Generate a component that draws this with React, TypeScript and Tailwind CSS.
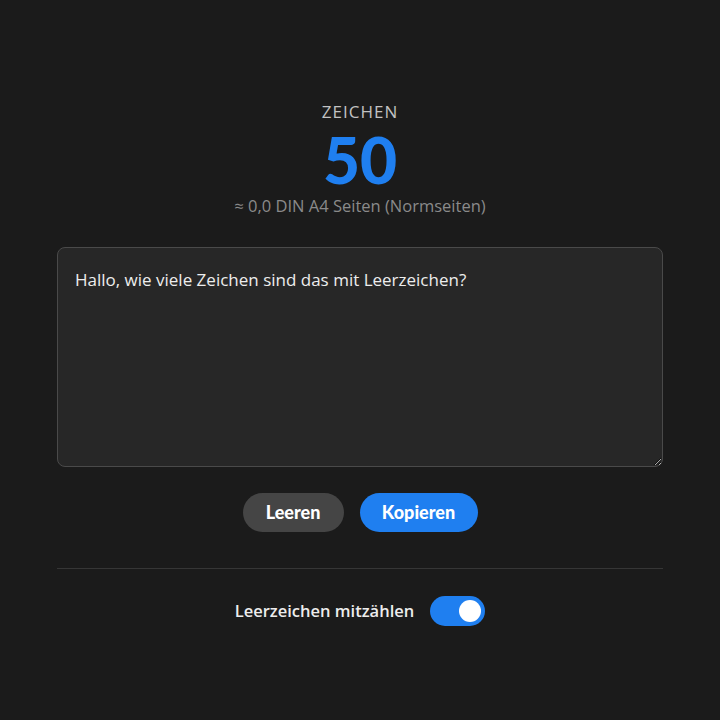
import { useState } from 'react';

export default function App() {
  const [text, setText] = useState('Hallo, wie viele Zeichen sind das mit Leerzeichen?');
  const [countSpaces, setCountSpaces] = useState(true);

  const count = countSpaces ? text.length : text.replace(/\s/g, '').length;
  const pages = (count / 1800).toFixed(1).replace('.', ',');

  return (
    <main className="min-h-[720px] bg-[#1b1b1b] font-['Open_Sans','Lato',sans-serif] text-[#ededed]">
      <div className="mx-auto w-[606px] pt-[102px]">
        <header className="flex flex-col items-center">
          <p className="text-[17px] leading-5 tracking-[0.06em] text-[#c2c2c2]">ZEICHEN</p>
          <p className="font-['Lato',sans-serif] text-[64px] font-black leading-[76px] text-[#1f7ff0]">
            {count}
          </p>
          <p className="text-[16.5px] leading-4 text-[#8a8a8a]">
            ≈ {pages} DIN A4 Seiten (Normseiten)
          </p>
        </header>

        <textarea
          value={text}
          onChange={(e) => setText(e.target.value)}
          className="mt-[33px] block h-[220px] w-full resize-y rounded-lg border border-[#4a4a4a] bg-[#272727] px-[17px] py-[20px] text-[17px] leading-6 text-[#ededed] outline-none"
        />

        <div className="mt-[26px] flex justify-center gap-4">
          <button
            onClick={() => setText('')}
            className="h-[39px] w-[101px] rounded-full bg-[#454545] font-['Lato',sans-serif] text-[18px] font-black text-white"
          >
            Leeren
          </button>
          <button
            onClick={() => navigator.clipboard?.writeText(text)}
            className="h-[39px] w-[118px] rounded-full bg-[#1f7ff0] font-['Lato',sans-serif] text-[18px] font-black text-white"
          >
            Kopieren
          </button>
        </div>

        <hr className="mt-[36px] border-t border-[#363636]" />

        <div className="mt-[27px] flex items-center justify-center gap-4">
          <span className="text-[16.5px] font-semibold text-[#ededed]">Leerzeichen mitzählen</span>
          <button
            role="switch"
            aria-checked={countSpaces}
            onClick={() => setCountSpaces(!countSpaces)}
            className={
              countSpaces
                ? 'flex h-[30px] w-[55px] items-center justify-end rounded-full bg-[#1f7ff0] px-[4px]'
                : 'flex h-[30px] w-[55px] items-center justify-start rounded-full bg-[#454545] px-[4px]'
            }
          >
            <span className="h-[22px] w-[22px] rounded-full bg-white" />
          </button>
        </div>
      </div>
    </main>
  );
}
